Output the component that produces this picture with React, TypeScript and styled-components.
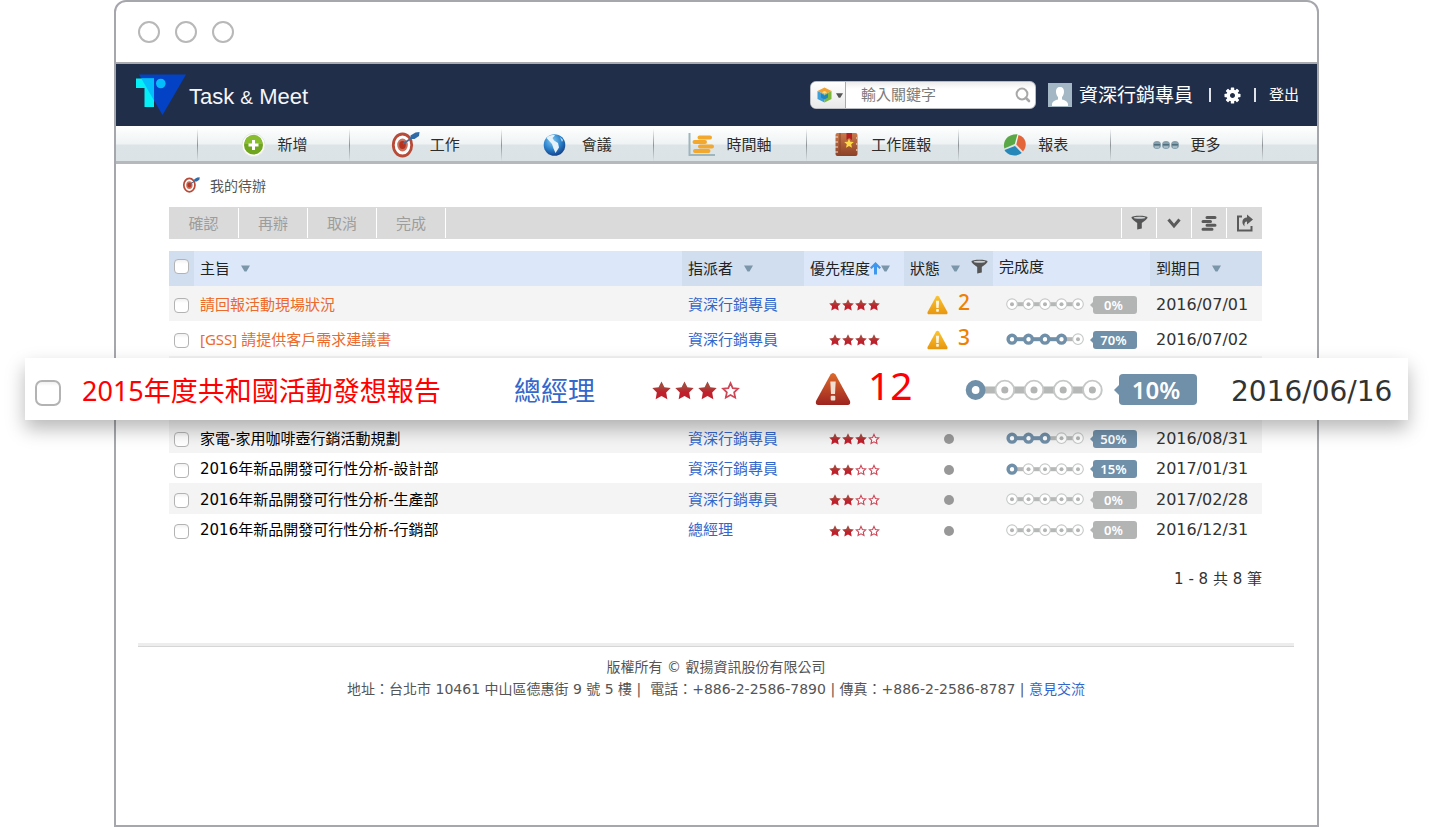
import React from 'react';
import styled, { createGlobalStyle } from 'styled-components';

const sans = '"DejaVu Sans", "Noto Sans CJK TC", sans-serif';
const humanist = '"Noto Sans", "Noto Sans CJK TC", sans-serif';
const frameGray = '#a6a7ac';

const GlobalStyle = createGlobalStyle`
  *, *::before, *::after { box-sizing: border-box; }
  body { margin: 0; background: #fff; color: #333; font-family: ${sans}; font-size: 15px; }
  button, input { font: inherit; }
  a { text-decoration: none; }
  svg { display: block; flex: none; overflow: visible; }
`;

const Page = styled.div`
  min-height: 100vh;
  padding: 0 114px;
  display: flex;
`;

const BrowserFrame = styled.div`
  flex: 1;
  min-width: 0;
  display: flex;
  flex-direction: column;
  border: 2px solid ${frameGray};
  border-radius: 12px 12px 0 0;
`;

const TitleBar = styled.div`
  display: flex;
  align-items: center;
  gap: 15px;
  height: 62px;
  padding: 0 22px;
  border-bottom: 2px solid #a9abae;
`;

const WindowDot = styled.span`
  width: 22px;
  height: 22px;
  border: 2px solid #b8b8b8;
  border-radius: 50%;
`;

const Header = styled.header`
  display: flex;
  align-items: center;
  height: 62px;
  padding: 0 18px 0 19px;
  background: #212e4a;
  color: #fff;
`;

const Brand = styled.a`
  display: flex;
  align-items: center;
  gap: 2px;
  margin-right: auto;
  color: #f4f6fa;
  font-family: "Liberation Sans", sans-serif;
  font-size: 22px;
`;

const BrandName = styled.span`
  padding-top: 3px;
`;

const Ampersand = styled.span`
  font-size: 19px;
`;

const SearchBox = styled.form`
  display: flex;
  align-items: center;
  width: 226px;
  height: 28px;
  border: 1px solid #b9bcc2;
  border-radius: 6px;
  background: linear-gradient(#ececec, #fff 7px);
  margin-right: 12px;
`;

const ScopeButton = styled.button`
  display: flex;
  align-items: center;
  gap: 4px;
  width: 35px;
  height: 26px;
  padding: 0 0 0 6px;
  border: 0;
  border-right: 1px solid #aaa;
  border-radius: 5px 0 0 5px;
  background: linear-gradient(#fff, #e9e9e9);
`;

const SearchInput = styled.input`
  flex: 1;
  min-width: 0;
  height: 24px;
  padding: 0 0 0 15px;
  border: 0;
  outline: 0;
  background: transparent;
  color: #444;
  &::placeholder { color: #7b7b7b; opacity: 1; }
`;

const IconButton = styled.button`
  display: flex;
  align-items: center;
  justify-content: center;
  padding: 0;
  border: 0;
  background: transparent;
  color: inherit;
`;

const SearchButton = styled(IconButton)`
  width: 24px;
  height: 24px;
  color: #a8a8a8;
`;

const UserLink = styled.a`
  display: flex;
  align-items: center;
  gap: 7px;
  margin-right: 16px;
  color: #fff;
  font-size: 19px;
  line-height: 24px;
`;

const UserActions = styled.div`
  display: flex;
  align-items: center;
  gap: 13px;
`;

const Divider = styled.span`
  width: 2px;
  height: 14px;
  background: #dfe2e8;
`;

const LogoutLink = styled.a`
  color: #fff;
  line-height: 22px;
`;

const NavBar = styled.nav`
  display: flex;
  height: 38px;
  padding: 0 54px 0 81px;
  border-bottom: 3px solid #b5b9bb;
  background: linear-gradient(#fff 0, #eff3f4 18px, #dde4e7 19px, #dce3e6 100%);
`;

const NavItem = styled.a`
  flex: 1;
  display: flex;
  align-items: center;
  justify-content: center;
  gap: 10px;
  color: #2d2d2d;
  border-left: 1px solid;
  border-image: linear-gradient(#b4bcc000 10%, #8e9498 55%, #b4bcc022 95%) 1;
  &:last-child { border-right: 1px solid; }
`;

const Content = styled.main`
  padding: 0 55px 0 53px;
`;

const PageHeading = styled.h1`
  display: flex;
  align-items: center;
  gap: 10px;
  height: 43px;
  margin: 0;
  padding: 0 0 2px 14px;
  color: #555;
  font-size: 14px;
  font-weight: 400;
`;

const Toolbar = styled.div`
  display: flex;
  justify-content: space-between;
  height: 32px;
  padding: 1px 0;
  margin-bottom: 12px;
  background: #dadada;
`;

const ToolGroup = styled.div`
  display: flex;
`;

const ToolButton = styled.button`
  width: 69px;
  padding: 0 0 2px;
  border: 0;
  border-right: 1px solid #fff;
  background: transparent;
  color: #9d9d9d;
  &:first-child { width: 70px; }
`;

const ToolIconButton = styled(IconButton)`
  width: 35px;
  border-left: 1px solid #fff;
  color: #5a5a5a;
  &:last-child { width: 36px; }
`;

const TaskTable = styled.table`
  width: 100%;
  table-layout: fixed;
  border-collapse: collapse;
`;

const Col = styled.col<{ $width?: number }>`
  width: ${(p) => (p.$width ? `${p.$width}px` : 'auto')};
`;

const HeadCell = styled.th<{ $dark?: boolean }>`
  height: 35px;
  padding: 0 0 0 6px;
  background: ${(p) => (p.$dark ? '#d1deef' : '#dce8f9')};
  color: #222;
  font-weight: 400;
  text-align: left;
`;

const HeadCheckCell = styled(HeadCell)`
  padding: 0 0 4px 5px;
`;

const HeadInner = styled.div<{ $gap?: number; $raised?: boolean }>`
  display: flex;
  align-items: center;
  gap: ${(p) => p.$gap ?? 11}px;
  padding-bottom: ${(p) => (p.$raised ? 4 : 0)}px;
  line-height: 24px;
`;

const HeadFilter = styled.span`
  padding-bottom: 4px;
`;

const TaskRow = styled.tr<{ $striped: boolean; $height: number }>`
  height: ${(p) => p.$height}px;
  background: ${(p) => (p.$striped ? '#f4f4f4' : '#fff')};
`;

const Cell = styled.td`
  padding: 2px 0 0 6px;
  line-height: 22px;
  white-space: nowrap;
`;

const CheckCell = styled(Cell)`
  padding: 4px 0 0 5px;
`;

const CenterCell = styled(Cell)`
  padding: 3px 0 0;
`;

const ProgressCell = styled(Cell)`
  padding-left: 13px;
`;

const DateCell = styled(Cell)`
  font-size: 16px;
`;

const CheckBox = styled.input<{ $size?: number }>`
  appearance: none;
  display: block;
  width: ${(p) => p.$size ?? 15}px;
  height: ${(p) => p.$size ?? 15}px;
  margin: 0;
  border: ${(p) => (p.$size ? 2 : 1)}px solid #b3b3b3;
  border-radius: ${(p) => (p.$size ? 7 : 4)}px;
  background: linear-gradient(#f1f1f1, #fff 4px);
`;

const TaskLink = styled.a<{ $late?: boolean }>`
  color: ${(p) => (p.$late ? '#ed6a2b' : '#000')};
  font-family: ${(p) => (p.$late ? humanist : sans)};
`;

const PersonLink = styled.a`
  color: #3467cb;
`;

const Centered = styled.div`
  display: flex;
  justify-content: center;
`;

const AlertStatus = styled.div`
  display: flex;
  align-items: center;
  gap: 10px;
  padding-left: 23px;
`;

const AlertCount = styled.span`
  padding-bottom: 6px;
  color: #f08000;
  font-family: ${humanist};
  font-size: 21px;
  font-weight: 500;
  line-height: 22px;
`;

const StatusDot = styled.span`
  width: 10px;
  height: 10px;
  border-radius: 50%;
  background: #989898;
`;

const ProgressBox = styled.div<{ $large?: boolean }>`
  display: flex;
  align-items: center;
  gap: ${(p) => (p.$large ? 16 : 9)}px;
`;

const Badge = styled.span<{ $active: boolean; $large?: boolean }>`
  position: relative;
  width: ${(p) => (p.$large ? 78 : 44)}px;
  height: ${(p) => (p.$large ? 31 : 18)}px;
  padding-right: ${(p) => (p.$large ? 4 : 3)}px;
  border-radius: ${(p) => (p.$large ? 4 : 3)}px;
  background: ${(p) => (p.$active ? '#708fa8' : '#b3b5b5')};
  color: #fff;
  font-family: ${humanist};
  font-size: ${(p) => (p.$large ? 24 : 13)}px;
  font-weight: 600;
  line-height: ${(p) => (p.$large ? 31 : 18)}px;
  text-align: center;
  &::before {
    content: '';
    position: absolute;
    top: 50%;
    right: 100%;
    border: solid transparent;
    border-width: ${(p) => (p.$large ? 5 : 3)}px;
    border-left-width: 0;
    border-right-color: ${(p) => (p.$active ? '#708fa8' : '#b3b5b5')};
    transform: translateY(-50%);
  }
`;

const FeaturedCell = styled.td`
  position: relative;
  height: 66px;
  padding: 0;
  background: #f4f4f4;
`;

const FeaturedTask = styled.div`
  position: absolute;
  z-index: 1;
  top: 2px;
  left: -144px;
  right: -146px;
  display: grid;
  grid-template-columns: 47px 1fr 138px 163px 150px 266px 177px;
  align-items: center;
  height: 62px;
  padding: 3px 0 0 10px;
  background: #fff;
  box-shadow: 0 9px 18px rgba(0, 0, 0, 0.28);
  font-family: ${humanist};
  font-size: 27px;
  line-height: 40px;
  white-space: nowrap;
`;

const FeaturedCheck = styled.div`
  padding-top: 5px;
`;

const FeaturedLink = styled.a`
  color: #f00;
`;

const FeaturedStatus = styled.div`
  display: flex;
  align-items: center;
  gap: 17px;
  padding-bottom: 3px;
`;

const FeaturedCount = styled.span`
  padding-bottom: 8px;
  color: #f00;
  font-size: 39px;
`;

const FeaturedProgress = styled.div`
  padding-bottom: 2px;
`;

const FeaturedDate = styled.span`
  padding-top: 2px;
  font-family: ${sans};
  font-size: 28px;
`;

const Summary = styled.p`
  margin: 24px 0 0;
  line-height: 22px;
  text-align: right;
`;

const Footer = styled.footer`
  margin: 53px 23px 0 22px;
  padding-top: 10px;
  border-top: 3px solid #ededed;
  box-shadow: inset 0 1px #d6d6d6;
  color: #555;
  font-size: 14px;
  line-height: 22px;
  text-align: center;
`;

const FooterLine = styled.p`
  margin: 0;
`;

function Logo() {
  return (
    <svg width="52" height="42" viewBox="0 0 52 42" aria-hidden="true">
      <path d="M4 0.500H51L27.500 41Z" fill="#0342c4" />
      <path d="M1 4.500H19V33H9.500V14H1Z" fill="#05f0f6" />
      <path d="M6.300 4.500H19V26.500Z" fill="#04bdfb" />
      <circle cx="25.800" cy="9.500" r="4.800" fill="#04bdfb" />
    </svg>
  );
}

function CubeIcon() {
  return (
    <svg width="15" height="16" viewBox="0 0 15 16" aria-hidden="true">
      <path d="M7.500 0.500L14.500 4L7.500 7.500L0.500 4Z" fill="#f4a02c" />
      <path d="M0.500 4L7.500 7.500V15.500L0.500 12Z" fill="#3f9fd8" />
      <path d="M14.500 4L7.500 7.500V15.500L14.500 12Z" fill="#7cb83c" />
      <path d="M4 6.500L7.500 8.500L11 6.500V10.500L7.500 12.500L4 10.500Z" fill="#1f86c2" />
      <path d="M5 5.300L7.500 4L10 5.300L7.500 6.800Z" fill="#fbe08a" />
    </svg>
  );
}

function Triangle({ size = 9, color = '#7b96a8' }: { size?: number; color?: string }) {
  return (
    <svg width={size} height="7" viewBox="0 0 9 7" aria-hidden="true">
      <path d="M0 0.500H9L5.500 6.500H3.500Z" fill={color} />
    </svg>
  );
}

function SearchIcon() {
  return (
    <svg width="16" height="16" viewBox="0 0 16 16" fill="none" stroke="currentColor" aria-hidden="true">
      <circle cx="7" cy="7" r="5.400" strokeWidth="2" />
      <path d="M11 11L14 14" strokeWidth="2.600" strokeLinecap="round" />
    </svg>
  );
}

function Avatar() {
  return (
    <svg width="24" height="24" viewBox="0 0 24 24" aria-hidden="true">
      <rect width="24" height="24" fill="#a3b8c4" />
      <path d="M12 4C9 4 7.800 6 8 9C8.200 11.500 9 13 10 14V16.500C7.500 17.200 4.500 18 4 21V23H20V21C19.500 18 16.500 17.200 14 16.500V14C15 13 15.800 11.500 16 9C16.200 6 15 4 12 4Z" fill="#fff" />
    </svg>
  );
}

function GearIcon() {
  return (
    <svg width="17" height="17" viewBox="-8.500 -8.500 17 17" aria-hidden="true">
      <circle r="4.300" fill="none" stroke="#fff" strokeWidth="3.600" />
      {[0, 45, 90, 135, 180, 225, 270, 315].map((angle) => (
        <rect key={angle} x="-1.700" y="-8" width="3.400" height="3.500" rx="0.600" fill="#fff" transform={`rotate(${angle})`} />
      ))}
    </svg>
  );
}

function AddIcon() {
  return (
    <svg width="28" height="28" viewBox="0 0 28 28" aria-hidden="true">
      <circle cx="13.500" cy="15" r="11.500" fill="#fff" stroke="#e3e6e7" />
      <circle cx="13.500" cy="15" r="9.500" fill="#6fa51f" />
      <path d="M4.300 14A9.200 9.200 0 0 1 22.700 14Z" fill="#87bd2e" />
      <path d="M13.500 10V20M8.500 15H18.500" stroke="#fff" strokeWidth="3" />
    </svg>
  );
}

function TargetIcon({ size = 28 }: { size?: number }) {
  return (
    <svg width={size} height={size} viewBox="0 0 28 28" aria-hidden="true">
      <ellipse cx="10.500" cy="15" rx="9.200" ry="11" fill="#fff" stroke="#b84a38" strokeWidth="2.800" />
      <ellipse cx="10.500" cy="15" rx="5.300" ry="6.400" fill="#c9705e" />
      <ellipse cx="10.500" cy="15" rx="3.300" ry="4" fill="#b5331f" />
      <path d="M11 14L21 7" stroke="#4a6f97" strokeWidth="1.600" />
      <path d="M18.500 5.500L23.500 2.500L27.500 2L27 6L22.500 9L18.500 9Z" fill="#2f6ba6" />
    </svg>
  );
}

function GlobeIcon() {
  return (
    <svg width="28" height="28" viewBox="0 0 28 28" aria-hidden="true">
      <defs>
        <radialGradient id="globe" cx="0.400" cy="0.300" r="0.700">
          <stop offset="0" stopColor="#7cc9f2" />
          <stop offset="0.600" stopColor="#2a7fc9" />
          <stop offset="1" stopColor="#16458c" />
        </radialGradient>
      </defs>
      <ellipse cx="10.500" cy="15" rx="10.800" ry="10.800" fill="url(#globe)" />
      <path d="M2.500 8C5 5 9 4.500 11 5.500L8.500 8L10 10.500L14 13L15 17.500L11.500 23L9.500 18.500L8 14Z" fill="#e6f2f8" />
      <path d="M16 7L19 10L18 12Z" fill="#bfe0f2" />
    </svg>
  );
}

function TimelineIcon() {
  return (
    <svg width="28" height="28" viewBox="0 0 28 28" aria-hidden="true">
      <path d="M1.500 3V25H27" fill="none" stroke="#9db5bd" strokeWidth="2" />
      <g stroke="#f2a72f" strokeWidth="4" strokeLinecap="round">
        <path d="M11.500 7.500H22M6.500 12H17M12 16.500H24M7 21H20.500" />
      </g>
    </svg>
  );
}

function BookIcon() {
  return (
    <svg width="28" height="28" viewBox="0 0 28 28" aria-hidden="true">
      <defs>
        <linearGradient id="book" x1="0" y1="0" x2="0" y2="1">
          <stop offset="0" stopColor="#c9794a" />
          <stop offset="1" stopColor="#8c4127" />
        </linearGradient>
      </defs>
      <rect x="2.500" y="3" width="22" height="23" rx="2" fill="url(#book)" />
      <path d="M7 3V26" stroke="#8b4527" />
      <path d="M2 7H5M2 12H5M2 17H5M2 22H5" stroke="#ece3dc" strokeWidth="1.200" />
      <path d="M24 7V9M24 13V15M24 19V21" stroke="#d9ad8d" strokeWidth="2" />
      <path d="M13.500 3H19V10L16.200 8L13.500 10Z" fill="#b51f1f" />
      <path d="M16 8.500L17.300 11.700L20.800 12L18.200 14.300L19 17.700L16 15.900L13 17.700L13.800 14.300L11.200 12L14.700 11.700Z" fill="#ffd848" />
    </svg>
  );
}

function PieIcon() {
  return (
    <svg width="28" height="28" viewBox="0 0 28 28" aria-hidden="true">
      <path d="M14.800 14L4.300 18.500C2.500 11 7 4 17.500 4.200Z" fill="#5aa845" />
      <path d="M18.500 5C26 6.500 28 16 23 21.500L16.300 14.500Z" fill="#e2663a" />
      <path d="M15 16L21.800 23C16.500 27 7.500 26 4.500 20Z" fill="#2588b8" />
    </svg>
  );
}

function MoreIcon() {
  return (
    <svg width="28" height="28" viewBox="0 0 28 28" aria-hidden="true">
      {[5, 14, 23].map((x) => (
        <g key={x}>
          <circle cx={x} cy="15" r="4" fill="#86a0ad" />
          <path d={`M${x - 3} 14H${x + 3}V15.500H${x - 3}Z`} fill="#50707f" />
          <path d={`M${x - 2} 17H${x + 2}`} stroke="#c3d3da" />
        </g>
      ))}
    </svg>
  );
}

function FunnelIcon() {
  return (
    <svg width="17" height="16" viewBox="0 0 17 16" aria-hidden="true">
      <path d="M0.500 2.500C0.500 0.200 16.500 0.200 16.500 2.500C16.500 4 12 7 10.800 8V13.500L6.200 14.500V8C5 7 0.500 4 0.500 2.500Z" fill="#555" />
      <ellipse cx="8.500" cy="2.700" rx="5.800" ry="1" fill="#c9cfd6" />
    </svg>
  );
}

function ChevronIcon() {
  return (
    <svg width="14" height="12" viewBox="0 0 14 12" aria-hidden="true">
      <path d="M1.500 2.500L7 9L12.500 2.500" fill="none" stroke="currentColor" strokeWidth="3" />
    </svg>
  );
}

function BarsIcon() {
  return (
    <svg width="16" height="16" viewBox="0 0 16 16" aria-hidden="true">
      <path d="M6 2.500H14M2 6.500H9.500M6 10.300H14M2 14.300H11" stroke="currentColor" strokeWidth="3" strokeLinecap="round" />
    </svg>
  );
}

function ShareIcon() {
  return (
    <svg width="18" height="18" viewBox="0 0 18 18" aria-hidden="true">
      <path d="M6 2.500H2V16.500H15.500V12" fill="none" stroke="currentColor" strokeWidth="2" />
      <path d="M11 0.500L17 5.500L11 10.500V7.500C9 7.500 8 9 8.500 12.500C5 9 6 3.800 11 3.500Z" fill="currentColor" />
    </svg>
  );
}

function SortArrow() {
  return (
    <svg width="11" height="13" viewBox="0 0 11 13" aria-hidden="true">
      <path d="M5.500 0L11 5.500L9.500 7L7 4.800V12.500H4V4.800L1.500 7L0 5.500Z" fill="#3f96ee" />
    </svg>
  );
}

const starPath = 'M6.500 0.300L8.500 4.300L12.800 4.800L9.700 7.900L10.500 12.500L6.500 10.300L2.500 12.500L3.300 7.900L0.200 4.800L4.500 4.300Z';

function Stars({ filled, pitch = 13, size = 12 }: { filled: number; pitch?: number; size?: number }) {
  const id = `star-${size}`;
  return (
    <svg width={pitch * 3 + size} height={size} role="img" aria-label={`${filled} / 4`}>
      <defs>
        <linearGradient id={id} x1="0" y1="0" x2="0" y2="1">
          <stop offset="0.300" stopColor="#a5483d" />
          <stop offset="0.600" stopColor="#c01f2c" />
        </linearGradient>
      </defs>
      {[0, 1, 2, 3].map((i) => (
        <g key={i} transform={`translate(${i * pitch} 0) scale(${size / 13})`}>
          {i < filled ? (
            <path d={starPath} fill={`url(#${id})`} />
          ) : (
            <path
              d="M6.500 1.500L8 4.900L11.600 5.300L9 7.800L9.700 11.400L6.500 9.600L3.300 11.400L4 7.800L1.400 5.300L5 4.900Z"
              fill="#fff"
              stroke="#cf4656"
              strokeWidth="1.200"
            />
          )}
        </g>
      ))}
    </svg>
  );
}

function WarningIcon({ severe = false }: { severe?: boolean }) {
  const id = severe ? 'severe' : 'notice';
  const [top, bottom] = severe ? ['#dd6a2c', '#9c2420'] : ['#fbc530', '#e8960f'];
  return (
    <svg width={severe ? 36 : 21} height={severe ? 34 : 20} viewBox="0 0 36 34" aria-hidden="true">
      <defs>
        <linearGradient id={id} x1="0" y1="0" x2="0" y2="1">
          <stop offset="0" stopColor={top} />
          <stop offset="1" stopColor={bottom} />
        </linearGradient>
      </defs>
      <path d="M15.500 2.500Q18 -0.500 20.500 2.500L35 29Q36 33 32.500 33H3.500Q0 33 1 29Z" fill={`url(#${id})`} />
      <path d="M15.300 9.500H20.700L20 22H16Z" fill={severe ? '#f2ddd2' : '#fff6df'} />
      <rect x="15.700" y="23.800" width="4.600" height="4.600" rx="1" fill={severe ? '#f2ddd2' : '#fff6df'} />
    </svg>
  );
}

function Chain({ filled, large = false }: { filled: number; large?: boolean }) {
  const width = large ? 138 : 78;
  return (
    <svg width={width} height={large ? 22 : 13} viewBox={large ? '0 0 78 12.400' : '0 0 78 13'} aria-hidden="true">
      {[0, 1, 2, 3].map((i) => (
        <path
          key={i}
          d={`M${10 + i * 16.5} 6.200h8`}
          stroke={i + 1 < filled ? '#708fa8' : '#b6b8b8'}
          strokeWidth="4"
        />
      ))}
      {[0, 1, 2, 3, 4].map((i) =>
        i < filled ? (
          <circle key={i} cx={6 + i * 16.5} cy="6.200" r="3.900" fill="#fff" stroke="#708fa8" strokeWidth="3.400" />
        ) : (
          <g key={i}>
            <circle cx={6 + i * 16.5} cy="6.200" r="5.300" fill="#fff" stroke="#c6c8c8" strokeWidth="1.100" />
            <circle cx={6 + i * 16.5} cy="6.200" r="2" fill="#b3b5b5" />
          </g>
        ),
      )}
    </svg>
  );
}

function Progress({ percent, steps, large }: { percent: number; steps: number; large?: boolean }) {
  return (
    <ProgressBox $large={large}>
      <Chain filled={steps} large={large} />
      <Badge $active={percent > 0} $large={large}>
        {percent}%
      </Badge>
    </ProgressBox>
  );
}

type Task = {
  title: string;
  owner: string;
  stars: number;
  alert?: number;
  percent: number;
  steps: number;
  due: string;
};

const urgentTasks: Task[] = [
  { title: '請回報活動現場狀況', owner: '資深行銷專員', stars: 4, alert: 2, percent: 0, steps: 0, due: '2016/07/01' },
  { title: '[GSS] 請提供客戶需求建議書', owner: '資深行銷專員', stars: 4, alert: 3, percent: 70, steps: 4, due: '2016/07/02' },
];

const otherTasks: Task[] = [
  { title: '家電-家用咖啡壺行銷活動規劃', owner: '資深行銷專員', stars: 3, percent: 50, steps: 3, due: '2016/08/31' },
  { title: '2016年新品開發可行性分析-設計部', owner: '資深行銷專員', stars: 2, percent: 15, steps: 1, due: '2017/01/31' },
  { title: '2016年新品開發可行性分析-生產部', owner: '資深行銷專員', stars: 2, percent: 0, steps: 0, due: '2017/02/28' },
  { title: '2016年新品開發可行性分析-行銷部', owner: '總經理', stars: 2, percent: 0, steps: 0, due: '2016/12/31' },
];

const navItems = [
  { label: '新增', icon: <AddIcon /> },
  { label: '工作', icon: <TargetIcon /> },
  { label: '會議', icon: <GlobeIcon /> },
  { label: '時間軸', icon: <TimelineIcon /> },
  { label: '工作匯報', icon: <BookIcon /> },
  { label: '報表', icon: <PieIcon /> },
  { label: '更多', icon: <MoreIcon /> },
];

function TaskItem({ task, index }: { task: Task; index: number }) {
  const striped = index % 2 === 0;
  const late = task.alert !== undefined;
  return (
    <TaskRow $striped={striped} $height={late ? 35 : striped ? 31 : 30}>
      <CheckCell>
        <CheckBox type="checkbox" aria-label={task.title} />
      </CheckCell>
      <Cell>
        <TaskLink href="#" $late={late}>{task.title}</TaskLink>
      </Cell>
      <Cell>
        <PersonLink href="#">{task.owner}</PersonLink>
      </Cell>
      <CenterCell>
        <Centered>
          <Stars filled={task.stars} />
        </Centered>
      </CenterCell>
      <CenterCell>
        {late ? (
          <AlertStatus>
            <WarningIcon />
            <AlertCount>{task.alert}</AlertCount>
          </AlertStatus>
        ) : (
          <Centered>
            <StatusDot />
          </Centered>
        )}
      </CenterCell>
      <ProgressCell>
        <Progress percent={task.percent} steps={task.steps} />
      </ProgressCell>
      <DateCell>{task.due}</DateCell>
    </TaskRow>
  );
}

export default function App() {
  return (
    <>
      <GlobalStyle />
      <Page>
        <BrowserFrame>
          <TitleBar>
            <WindowDot />
            <WindowDot />
            <WindowDot />
          </TitleBar>
          <Header>
            <Brand href="#">
              <Logo />
              <BrandName>
                Task <Ampersand>&amp;</Ampersand> Meet
              </BrandName>
            </Brand>
            <SearchBox role="search">
              <ScopeButton type="button" aria-label="搜尋範圍">
                <CubeIcon />
                <Triangle size={7} color="#555" />
              </ScopeButton>
              <SearchInput type="text" placeholder="輸入關鍵字" aria-label="輸入關鍵字" />
              <SearchButton type="submit" aria-label="搜尋">
                <SearchIcon />
              </SearchButton>
            </SearchBox>
            <UserLink href="#">
              <Avatar />
              資深行銷專員
            </UserLink>
            <UserActions>
              <Divider />
              <IconButton type="button" aria-label="設定">
                <GearIcon />
              </IconButton>
              <Divider />
              <LogoutLink href="#">登出</LogoutLink>
            </UserActions>
          </Header>
          <NavBar>
            {navItems.map((item) => (
              <NavItem href="#" key={item.label}>
                {item.icon}
                {item.label}
              </NavItem>
            ))}
          </NavBar>
          <Content>
            <PageHeading>
              <TargetIcon size={17} />
              我的待辦
            </PageHeading>
            <Toolbar>
              <ToolGroup>
                {['確認', '再辦', '取消', '完成'].map((label) => (
                  <ToolButton type="button" key={label}>{label}</ToolButton>
                ))}
              </ToolGroup>
              <ToolGroup>
                <ToolIconButton type="button" aria-label="篩選"><FunnelIcon /></ToolIconButton>
                <ToolIconButton type="button" aria-label="展開"><ChevronIcon /></ToolIconButton>
                <ToolIconButton type="button" aria-label="時間軸"><BarsIcon /></ToolIconButton>
                <ToolIconButton type="button" aria-label="匯出"><ShareIcon /></ToolIconButton>
              </ToolGroup>
            </Toolbar>
            <TaskTable>
              <colgroup>
                <Col $width={25} />
                <Col />
                <Col $width={122} />
                <Col $width={100} />
                <Col $width={89} />
                <Col $width={157} />
                <Col $width={112} />
              </colgroup>
              <thead>
                <tr>
                  <HeadCheckCell $dark>
                    <CheckBox type="checkbox" aria-label="全選" />
                  </HeadCheckCell>
                  <HeadCell><HeadInner>主旨 <Triangle /></HeadInner></HeadCell>
                  <HeadCell $dark><HeadInner>指派者 <Triangle /></HeadInner></HeadCell>
                  <HeadCell><HeadInner $gap={0}>優先程度<SortArrow /><Triangle /></HeadInner></HeadCell>
                  <HeadCell $dark>
                    <HeadInner>
                      狀態 <Triangle />
                      <HeadFilter><FunnelIcon /></HeadFilter>
                    </HeadInner>
                  </HeadCell>
                  <HeadCell><HeadInner $raised>完成度</HeadInner></HeadCell>
                  <HeadCell $dark><HeadInner>到期日 <Triangle /></HeadInner></HeadCell>
                </tr>
              </thead>
              <tbody>
                {urgentTasks.map((task, index) => (
                  <TaskItem key={task.title} task={task} index={index} />
                ))}
                <tr>
                  <FeaturedCell colSpan={7}>
                    <FeaturedTask>
                      <FeaturedCheck>
                        <CheckBox type="checkbox" $size={26} aria-label="2015年度共和國活動發想報告" />
                      </FeaturedCheck>
                      <FeaturedLink href="#">2015年度共和國活動發想報告</FeaturedLink>
                      <PersonLink href="#">總經理</PersonLink>
                      <Stars filled={3} pitch={23} size={19} />
                      <FeaturedStatus>
                        <WarningIcon severe />
                        <FeaturedCount>12</FeaturedCount>
                      </FeaturedStatus>
                      <FeaturedProgress>
                        <Progress percent={10} steps={1} large />
                      </FeaturedProgress>
                      <FeaturedDate>2016/06/16</FeaturedDate>
                    </FeaturedTask>
                  </FeaturedCell>
                </tr>
                {otherTasks.map((task, index) => (
                  <TaskItem key={task.title} task={task} index={index} />
                ))}
              </tbody>
            </TaskTable>
            <Summary>1 - 8 共 8 筆</Summary>
          </Content>
          <Footer>
            <FooterLine>版權所有 © 叡揚資訊股份有限公司</FooterLine>
            <FooterLine>
              地址：台北市 10461 中山區德惠街 9 號 5 樓 |&nbsp; 電話：+886-2-2586-7890 | 傳真：+886-2-2586-8787 |{' '}
              <PersonLink href="#">意見交流</PersonLink>
            </FooterLine>
          </Footer>
        </BrowserFrame>
      </Page>
    </>
  );
}
